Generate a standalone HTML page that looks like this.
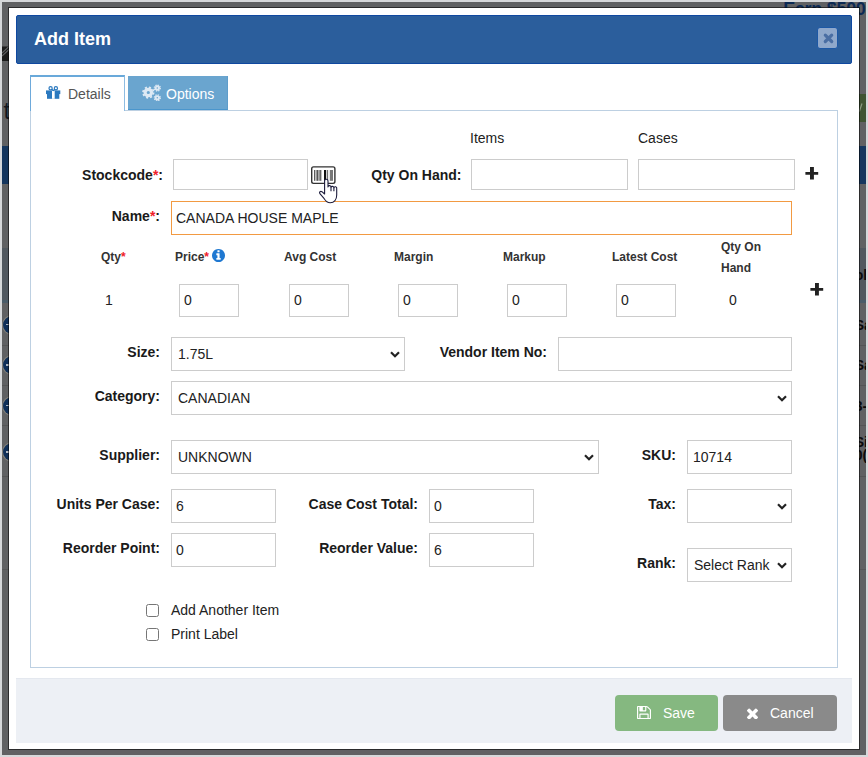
<!DOCTYPE html>
<html><head><meta charset="utf-8">
<style>
*{box-sizing:border-box;margin:0;padding:0}
html,body{width:868px;height:757px;overflow:hidden}
body{position:relative;background:#d6d8da;font-family:"Liberation Sans",sans-serif;font-size:14px;color:#222;line-height:20px}
.abs,.t,.lb,.in,.sel,.h12{position:absolute}
.t,.lb,.h12{white-space:nowrap;line-height:20px}
.lb{font-weight:bold;color:#1a1a1a}
.h12{font-weight:bold;font-size:12px;color:#333}
.req{color:#f0202a}
.in,.sel{background:#fff;border:1px solid #ccc;display:flex;align-items:center;padding-left:4px;color:#222;white-space:nowrap}
.sel{padding-left:6px}
.sel svg{position:absolute;right:4px;top:50%;margin-top:-3px}
#backdrop{left:2px;top:2px;width:864px;height:753px;background:#606163;overflow:hidden}
#modal{left:9px;top:8px;width:850px;height:741px;background:#fff;box-shadow:0 0 0 1px rgba(0,0,0,.55)}
#hdr{left:16px;top:15px;width:836px;height:49px;background:#2b5e9c;border:1px solid #0f48a0;border-radius:2px}
#title{left:34px;top:27px;font-size:18px;font-weight:bold;color:#fff;line-height:24px}
#closeb{left:816.5px;top:27px;width:21px;height:21.5px;background:#8fa8cb;border:1px solid #1d58a5;border-radius:3px}
#tab1{left:30px;top:75px;width:95px;height:36px;background:#fff;border-left:1px solid #6eaadb;border-right:1px solid #8fbde2;border-top:2px solid #69a9da}
#tab2{left:128px;top:76px;width:100px;height:34px;background:#6aa5cf;border-bottom:1px solid #4a96cd;border-right:1px solid #5e9dcb}
#panel{left:30px;top:110px;width:808px;height:558px;border:1px solid #bdd0e2;background:#fff}
#foot{left:16px;top:678px;width:836px;height:65px;background:#edf0f5;border-top:1px solid #e4e8ef}
.btn{position:absolute;top:695px;height:36px;border-radius:4px;color:#fff}
</style></head><body>
<div id="backdrop" class="abs">
  <div class="abs" style="left:0;top:246px;width:864px;height:55px;background:#51585f"></div>
  <div class="abs" style="left:0;top:298px;width:864px;height:3px;background:#4a5c69"></div>
  <div class="abs" style="left:0;top:144px;width:864px;height:38px;background:#15365e"></div>
  <div class="abs" style="left:857px;top:92px;width:7px;height:28px;background:#3f5432"></div>
  <svg class="abs" style="left:857px;top:101px" width="4" height="9"><path d="M0.3 8.5L3 .5" stroke="#8b9a80" stroke-width="1.2"/></svg>
  <div class="abs" style="left:0;top:343px;width:864px;height:1px;background:#545556"></div>
  <div class="abs" style="left:0;top:383px;width:864px;height:1px;background:#545556"></div>
  <div class="abs" style="left:0;top:423px;width:864px;height:1px;background:#545556"></div>
  <div class="abs" style="left:0;top:474px;width:864px;height:1px;background:#545556"></div>
  <div class="abs" style="left:0;top:567px;width:864px;height:1px;background:#565758"></div>
  <div class="abs" style="left:0.5px;top:313.7px;width:18px;height:18px;border-radius:9px;background:#0f2f59;box-shadow:0 0 0 1px #85827a"></div>
  <div class="abs" style="left:3.5px;top:322px;width:6px;height:1.4px;background:#aeb6c2"></div>
  <div class="abs" style="left:0.5px;top:354.1px;width:18px;height:18px;border-radius:9px;background:#0f2f59;box-shadow:0 0 0 1px #85827a"></div>
  <div class="abs" style="left:3.5px;top:362.4px;width:6px;height:1.4px;background:#aeb6c2"></div>
  <div class="abs" style="left:0.5px;top:394.5px;width:18px;height:18px;border-radius:9px;background:#0f2f59;box-shadow:0 0 0 1px #85827a"></div>
  <div class="abs" style="left:3.5px;top:402.8px;width:6px;height:1.4px;background:#aeb6c2"></div>
  <div class="abs" style="left:0.5px;top:440.9px;width:18px;height:18px;border-radius:9px;background:#0f2f59;box-shadow:0 0 0 1px #85827a"></div>
  <div class="abs" style="left:3.5px;top:449.2px;width:6px;height:1.4px;background:#aeb6c2"></div>
  <svg class="abs" style="left:0;top:43.5px" width="7" height="15"><rect width="7" height="14.5" y=".5" fill="#1b1b1b"/><path d="M0 7l7-6.5M0 10l7-6.5" stroke="#606163" stroke-width="1.1"/></svg>
  <div class="t" style="left:1.5px;top:94.38px;font-size:24px;line-height:30px;color:#11161f">t</div>
  <div class="t" style="left:781.2px;top:-4.7px;font-size:18px;font-weight:bold;line-height:24px;letter-spacing:-.3px;color:#0c2a54">Earn $500</div>
  <div class="t" style="left:852.7px;top:263.15px;font-size:14px;line-height:20px;font-weight:bold;color:#0a0a0a">ol</div>
  <div class="t" style="left:852.7px;top:313.15px;font-size:14px;line-height:20px;font-weight:bold;color:#0a0a0a">Sa</div>
  <div class="t" style="left:852.7px;top:353.15px;font-size:14px;line-height:20px;font-weight:bold;color:#0a0a0a">Sa</div>
  <div class="t" style="left:852.7px;top:394.15px;font-size:14px;line-height:20px;font-weight:bold;color:#0a0a0a">3-</div>
  <div class="t" style="left:852.7px;top:430.15px;font-size:14px;line-height:20px;font-weight:bold;color:#0a0a0a">Si</div>
  <div class="t" style="left:852.7px;top:443.15px;font-size:14px;line-height:20px;font-weight:bold;color:#0a0a0a">0(</div>
</div>
<div id="modal" class="abs"></div>
<div id="hdr" class="abs"></div>
<div id="title" class="t">Add Item</div>
<div id="closeb" class="abs"><svg width="19" height="19" viewBox="0 0 19 19" style="position:absolute;left:0;top:0"><path d="M7.3 7.1l6.4 6.4M13.7 7.1l-6.4 6.4" stroke="#4a6ea3" stroke-width="3.2" stroke-linecap="round"/></svg></div>

<div id="panel" class="abs"></div>
<div id="tab1" class="abs"></div>
<div id="tab2" class="abs"></div>
<!-- gift icon -->
<svg class="abs" style="left:46px;top:86px" width="15" height="13" viewBox="0 0 15 13"><g fill="#2b79bf"><rect x="0" y="4.4" width="14.3" height="3.7"/><rect x="1" y="8" width="12.3" height="4.8"/></g><rect x="6" y="4.9" width="2.7" height="7.9" fill="#fff"/><g fill="none" stroke="#2b79bf" stroke-width="1.2"><circle cx="4.6" cy="2.3" r="1.6"/><circle cx="9.9" cy="2.3" r="1.6"/><path d="M5.6 3.3L7.3 4.6 8.9 3.3"/></g></svg>
<div class="t" style="left:68px;top:84px;color:#555">Details</div>
<!-- cogs icon -->
<svg class="abs" style="left:142px;top:84px" width="19" height="17" viewBox="0 0 19 17"><g fill="none" stroke="#dde9f4"><circle cx="6.3" cy="8.5" r="3.2" stroke-width="3.2"/><circle cx="6.3" cy="8.5" r="5.3" stroke-width="1.7" stroke-dasharray="2.1 2.06"/><circle cx="15.3" cy="4" r="1.7" stroke-width="1.9"/><circle cx="15.3" cy="4" r="3" stroke-width="1.3" stroke-dasharray="1.3 1.06"/><circle cx="15.3" cy="13.8" r="1.7" stroke-width="1.9"/><circle cx="15.3" cy="13.8" r="3" stroke-width="1.3" stroke-dasharray="1.3 1.06"/></g></svg>
<div class="t" style="left:166px;top:84px;color:#fff">Options</div>

<!-- Row 1 -->
<div class="t" style="left:470px;top:128px">Items</div>
<div class="t" style="left:638px;top:128px">Cases</div>
<div class="lb" style="right:705px;top:165px">Stockcode<span class="req">*</span>:</div>
<div class="in" style="left:173px;top:159px;width:135px;height:31px"></div>
<!-- barcode -->
<svg class="abs" style="left:310px;top:165px" width="27" height="20" viewBox="0 0 27 20"><rect x="1.7" y="1.9" width="23.2" height="16.5" rx="1.8" fill="#fff" stroke="#333" stroke-width="1.4"/><g fill="#333"><rect x="4.2" y="5" width="1.1" height="10.8"/><rect x="6.4" y="5" width="2.1" height="10.8" fill="#555"/><rect x="9.3" y="5" width="2.1" height="10.8" fill="#666"/><rect x="14" y="5" width="2.2" height="10.8" fill="#111"/><rect x="17.3" y="5" width=".8" height="10.8"/><rect x="19.8" y="5" width="3.2" height="10.8" fill="#777"/></g></svg>
<!-- hand cursor -->
<svg class="abs" style="left:318px;top:178px;z-index:5" width="20" height="26" viewBox="-1 -1 20 26"><path d="M5.6 1.9a1.7 1.7 0 0 1 3.4 0V8a1.5 1.5 0 0 1 3 .3 1.5 1.5 0 0 1 2.9 .5 1.4 1.4 0 0 1 2.8 .8V16c0 4.5-2.5 7.7-6.5 7.7-3 0-4.5-1.5-6-4L.9 14.7c-1-1.5 .5-3 2-2L5.6 15z" fill="#fff" stroke="#1c1c3c" stroke-width="1.1" stroke-linejoin="round"/><path d="M12 8.3V12.2M14.9 8.8V12.2" stroke="#1c1c3c" stroke-width="1.1" fill="none"/></svg>
<div class="lb" style="right:406.5px;top:165px">Qty On Hand:</div>
<div class="in" style="left:471px;top:159px;width:157px;height:31px"></div>
<div class="in" style="left:638px;top:159px;width:157px;height:31px"></div>
<svg class="abs plus" style="left:805px;top:167px" width="14" height="13" viewBox="0 0 14 13"><path d="M5 0h3.9v12.6H5zM.4 5h12.8v2.8H.4z" fill="#222"/></svg>

<!-- Row 2: Name -->
<div class="lb" style="right:708px;top:206px">Name<span class="req">*</span>:</div>
<div class="in" style="left:171px;top:201px;width:621px;height:34px;border-color:#f29a42">CANADA HOUSE MAPLE</div>

<!-- Row 3 headers -->
<div class="h12" style="left:101px;top:247px">Qty<span class="req">*</span></div>
<div class="h12" style="left:175px;top:247px">Price<span class="req">*</span></div>
<svg class="abs" style="left:212px;top:249px" width="13" height="13" viewBox="128 128 1536 1536"><path fill="#1f78d1" d="M1152 1376v-160q0-14-9-23t-23-9h-96v-512q0-14-9-23t-23-9h-320q-14 0-23 9t-9 23v160q0 14 9 23t23 9h96v320h-96q-14 0-23 9t-9 23v160q0 14 9 23t23 9h448q14 0 23-9t9-23zm-128-896v-160q0-14-9-23t-23-9h-192q-14 0-23 9t-9 23v160q0 14 9 23t23 9h192q14 0 23-9t9-23zm640 416q0 209-103 385.5t-279.5 279.5-385.5 103-385.5-103-279.5-279.5-103-385.5 103-385.5 279.5-279.5 385.5-103 385.5 103 279.5 279.5 103 385.5z"/></svg>
<div class="h12" style="left:284px;top:247px">Avg Cost</div>
<div class="h12" style="left:394px;top:247px">Margin</div>
<div class="h12" style="left:503px;top:247px">Markup</div>
<div class="h12" style="left:612px;top:247px">Latest Cost</div>
<div class="h12" style="left:721px;top:237px;line-height:20.5px">Qty On<br>Hand</div>
<div class="t" style="left:105px;top:290px">1</div>
<div class="in" style="left:179px;top:284px;width:60px;height:33px;padding-bottom:2px">0</div>
<div class="in" style="left:289px;top:284px;width:60px;height:33px;padding-bottom:2px">0</div>
<div class="in" style="left:398px;top:284px;width:60px;height:33px;padding-bottom:2px">0</div>
<div class="in" style="left:507px;top:284px;width:60px;height:33px;padding-bottom:2px">0</div>
<div class="in" style="left:616px;top:284px;width:60px;height:33px;padding-bottom:2px">0</div>
<div class="t" style="left:729px;top:290px">0</div>
<svg class="abs plus" style="left:810px;top:282.5px" width="14" height="13" viewBox="0 0 14 13"><path d="M5 0h3.9v12.6H5zM.4 5h12.8v2.8H.4z" fill="#222"/></svg>

<!-- Row 4: Size / Vendor -->
<div class="lb" style="right:708px;top:342px">Size:</div>
<div class="sel" style="left:171px;top:337px;width:234px;height:34px">1.75L<svg width="10" height="7" viewBox="0 0 10 7"><path d="M1 1.2l4 4 4-4" fill="none" stroke="#222" stroke-width="2.2"/></svg></div>
<div class="lb" style="right:321px;top:342px">Vendor Item No:</div>
<div class="in" style="left:558px;top:337px;width:234px;height:34px"></div>

<!-- Row 5: Category -->
<div class="lb" style="right:708px;top:386px">Category:</div>
<div class="sel" style="left:171px;top:381px;width:621px;height:34px">CANADIAN<svg width="10" height="7" viewBox="0 0 10 7"><path d="M1 1.2l4 4 4-4" fill="none" stroke="#222" stroke-width="2.2"/></svg></div>

<!-- Row 6: Supplier / SKU -->
<div class="lb" style="right:708px;top:445px">Supplier:</div>
<div class="sel" style="left:171px;top:440px;width:428px;height:34px">UNKNOWN<svg width="10" height="7" viewBox="0 0 10 7"><path d="M1 1.2l4 4 4-4" fill="none" stroke="#222" stroke-width="2.2"/></svg></div>
<div class="lb" style="right:192px;top:445px">SKU:</div>
<div class="in" style="left:687px;top:440px;width:105px;height:34px;padding-left:5px">10714</div>

<!-- Row 7 -->
<div class="lb" style="right:708px;top:494px">Units Per Case:</div>
<div class="in" style="left:171px;top:489px;width:105px;height:34px">6</div>
<div class="lb" style="right:450px;top:494px">Case Cost Total:</div>
<div class="in" style="left:429px;top:489px;width:105px;height:34px">0</div>
<div class="lb" style="right:192px;top:494px">Tax:</div>
<div class="sel" style="left:687px;top:489px;width:105px;height:34px"><svg width="10" height="7" viewBox="0 0 10 7"><path d="M1 1.2l4 4 4-4" fill="none" stroke="#222" stroke-width="2.2"/></svg></div>

<!-- Row 8 -->
<div class="lb" style="right:708px;top:538px">Reorder Point:</div>
<div class="in" style="left:171px;top:533px;width:105px;height:34px">0</div>
<div class="lb" style="right:450px;top:538px">Reorder Value:</div>
<div class="in" style="left:429px;top:533px;width:105px;height:34px">6</div>
<div class="lb" style="right:192px;top:553px">Rank:</div>
<div class="sel" style="left:687px;top:548px;width:105px;height:34px">Select Rank<svg width="10" height="7" viewBox="0 0 10 7"><path d="M1 1.2l4 4 4-4" fill="none" stroke="#222" stroke-width="2.2"/></svg></div>

<!-- checkboxes -->
<div class="abs" style="left:146px;top:604px;width:13px;height:13px;border:1px solid #767676;border-radius:2.5px;background:#fff"></div>
<div class="t" style="left:171px;top:600px">Add Another Item</div>
<div class="abs" style="left:146px;top:628px;width:13px;height:13px;border:1px solid #767676;border-radius:2.5px;background:#fff"></div>
<div class="t" style="left:171px;top:624px">Print Label</div>

<!-- footer -->
<div id="foot" class="abs"></div>
<div class="btn" style="left:615px;width:103px;background:#85b880"></div>
<svg class="abs" style="left:637px;top:706px" width="14" height="13" viewBox="128 128 1536 1536" preserveAspectRatio="none"><path fill="#fff" d="M512 1536h768v-384h-768v384zm896 0h128v-896q0-14-10-38.5t-20-34.5l-281-281q-10-10-34-20t-39-10v416q0 40-28 68t-68 28h-576q-40 0-68-28t-28-68v-416h-128v1280h128v-416q0-40 28-68t68-28h832q40 0 68 28t28 68v416zm-384-928v-320q0-13-9.5-22.5t-22.5-9.5h-192q-13 0-22.5 9.5t-9.5 22.5v320q0 13 9.5 22.5t22.5 9.5h192q13 0 22.5-9.5t9.5-22.5zm640 32v928q0 40-28 68t-68 28h-1344q-40 0-68-28t-28-68v-1344q0-40 28-68t68-28h928q40 0 88 20t76 48l280 280q28 28 48 76t20 88z"/></svg>
<div class="t" style="left:663px;top:703px;color:#fff">Save</div>
<div class="btn" style="left:723px;width:114px;background:#8a8a8a"></div>
<svg class="abs" style="left:747px;top:708px" width="11" height="11" viewBox="302 302 1188 1188"><path fill="#fff" d="M1490 1322q0 40-28 68l-136 136q-28 28-68 28t-68-28l-294-294-294 294q-28 28-68 28t-68-28l-136-136q-28-28-28-68t28-68l294-294-294-294q-28-28-28-68t28-68l136-136q28-28 68-28t68 28l294 294 294-294q28-28 68-28t68 28l136 136q28 28 28 68t-28 68l-294 294 294 294q28 28 28 68z"/></svg>
<div class="t" style="left:770px;top:703px;color:#fff">Cancel</div>
</body></html>
